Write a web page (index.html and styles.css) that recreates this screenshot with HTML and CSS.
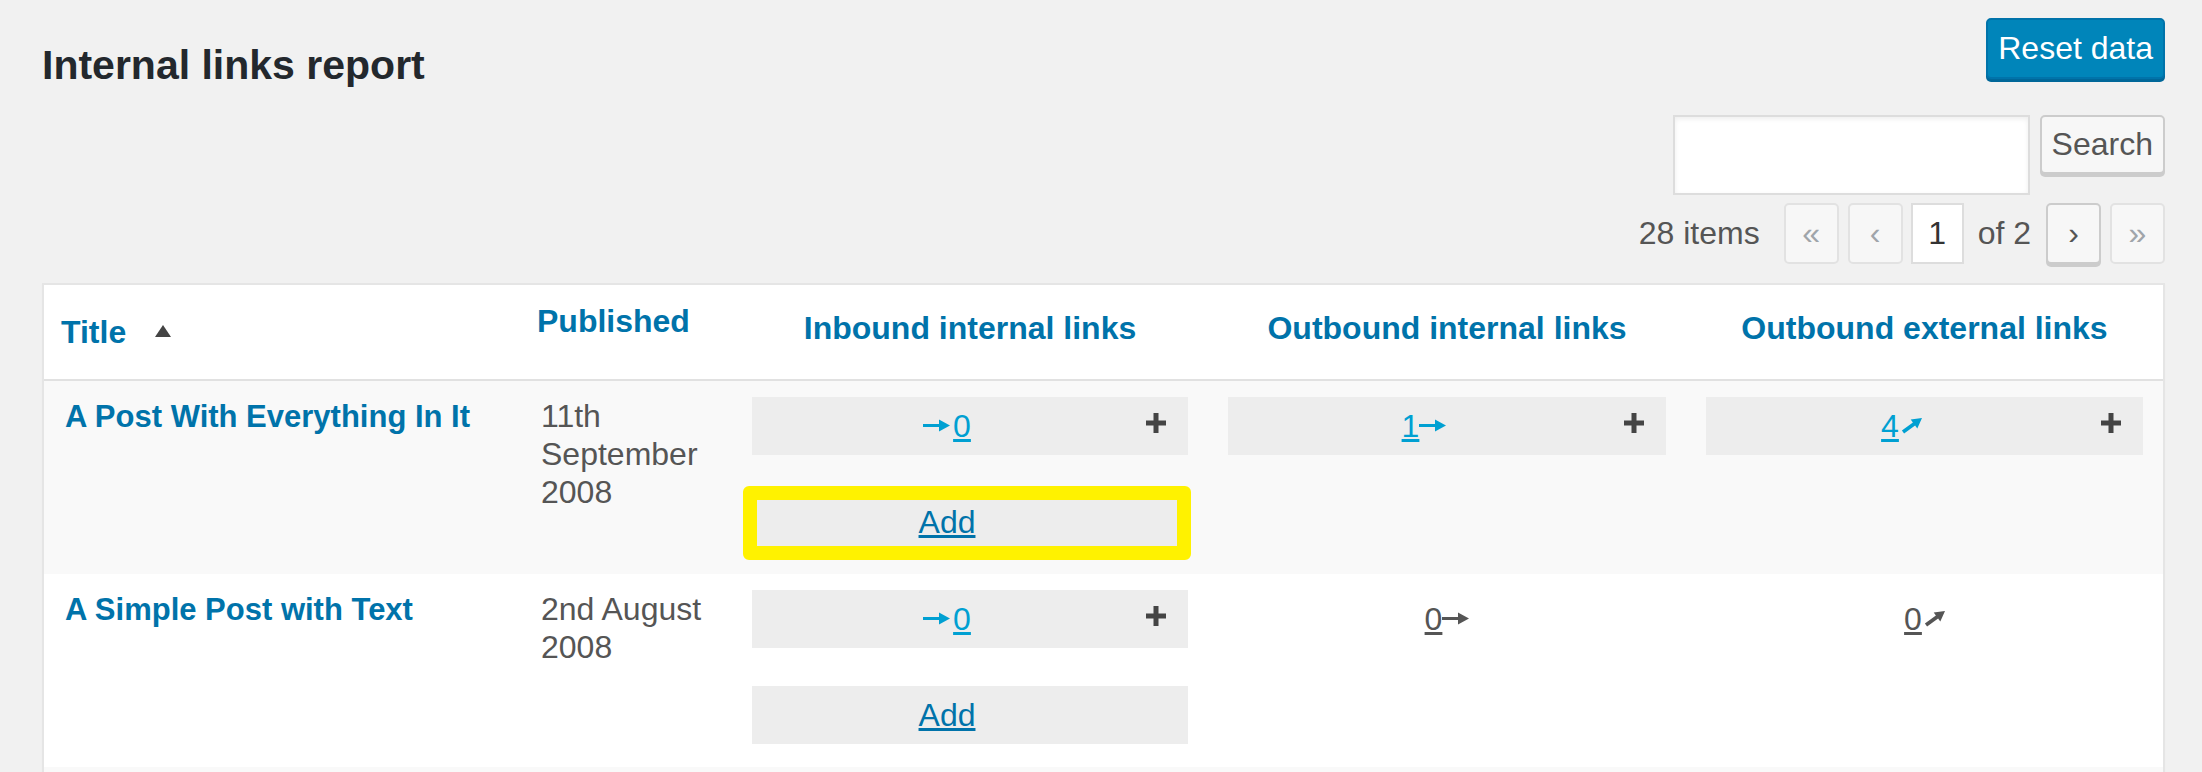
FILE: index.html
```html
<!DOCTYPE html>
<html lang="en">
<head>
<meta charset="utf-8">
<title>Internal links report</title>
<link rel="stylesheet" href="styles.css">
</head>
<body>
<div class="wrap">
  <div class="topbar">
    <h1 class="page-title">Internal links report</h1>
    <button class="btn btn-primary" type="button">Reset data</button>
  </div>

  <div class="search-row">
    <input class="search-input" type="search" aria-label="Search">
    <button class="btn btn-secondary" type="button">Search</button>
  </div>

  <div class="tablenav">
    <span class="items-count">28 items</span>
    <span class="page-btn disabled gap-9">«</span>
    <span class="page-btn disabled gap-8">‹</span>
    <input class="page-input" type="text" value="1" aria-label="Current page">
    <span class="page-total">of 2</span>
    <a class="page-btn active gap-9" href="#">›</a>
    <span class="page-btn disabled">»</span>
  </div>

  <table class="report">
    <colgroup>
      <col class="col-title">
      <col class="col-date">
      <col class="col-in">
      <col class="col-outint">
      <col class="col-outext">
    </colgroup>
    <thead>
      <tr>
        <th class="th-title"><a href="#">Title</a><svg class="sort-ind" viewBox="0 0 16 12" width="16" height="12"><path d="M8 0l8 12H0z"/></svg></th>
        <th class="th-date"><a href="#">Published</a></th>
        <th class="th-center">Inbound internal links</th>
        <th class="th-center">Outbound internal links</th>
        <th class="th-center">Outbound external links</th>
      </tr>
    </thead>
    <tbody>
      <tr class="alt">
        <td class="td-title"><a href="#">A Post With Everything In It</a></td>
        <td class="td-date">11th September 2008</td>
        <td class="td-box">
          <div class="link-box">
            <span class="count"><svg class="arr-r pre" viewBox="0 0 27 13" width="27" height="13"><path d="M0 5h16V0.5L27 6.5 16 12.5V8H0z"/></svg><a href="#">0</a></span>
            <svg class="plus" viewBox="0 0 20 20" width="20" height="20"><path d="M7.5 0h5v7.5H20v5h-7.5V20h-5v-7.5H0v-5h7.5z"/></svg>
          </div>
          <div class="add-box highlighted">
            <a href="#">Add</a>
            <span class="highlight" aria-hidden="true"></span>
          </div>
        </td>
        <td class="td-box">
          <div class="link-box">
            <span class="count"><a href="#">1</a><svg class="arr-r" viewBox="0 0 27 13" width="27" height="13"><path d="M0 5h16V0.5L27 6.5 16 12.5V8H0z"/></svg></span>
            <svg class="plus" viewBox="0 0 20 20" width="20" height="20"><path d="M7.5 0h5v7.5H20v5h-7.5V20h-5v-7.5H0v-5h7.5z"/></svg>
          </div>
        </td>
        <td class="td-box">
          <div class="link-box">
            <span class="count"><a href="#">4</a><svg class="arr-d" viewBox="0 0 21 16" width="21" height="16"><path d="M21 0L9.7 1.6 11.9 4.6 0.9 12.6 3.1 15.4 14.1 7.4 16.3 10.4z"/></svg></span>
            <svg class="plus" viewBox="0 0 20 20" width="20" height="20"><path d="M7.5 0h5v7.5H20v5h-7.5V20h-5v-7.5H0v-5h7.5z"/></svg>
          </div>
        </td>
      </tr>
      <tr>
        <td class="td-title"><a href="#">A Simple Post with Text</a></td>
        <td class="td-date">2nd August 2008</td>
        <td class="td-box">
          <div class="link-box">
            <span class="count"><svg class="arr-r pre" viewBox="0 0 27 13" width="27" height="13"><path d="M0 5h16V0.5L27 6.5 16 12.5V8H0z"/></svg><a href="#">0</a></span>
            <svg class="plus" viewBox="0 0 20 20" width="20" height="20"><path d="M7.5 0h5v7.5H20v5h-7.5V20h-5v-7.5H0v-5h7.5z"/></svg>
          </div>
          <div class="add-box">
            <a href="#">Add</a>
          </div>
        </td>
        <td class="td-box">
          <div class="link-box plain">
            <span class="count"><a href="#">0</a><svg class="arr-r" viewBox="0 0 27 13" width="27" height="13"><path d="M0 5h16V0.5L27 6.5 16 12.5V8H0z"/></svg></span>
          </div>
        </td>
        <td class="td-box">
          <div class="link-box plain">
            <span class="count"><a href="#">0</a><svg class="arr-d" viewBox="0 0 21 16" width="21" height="16"><path d="M21 0L9.7 1.6 11.9 4.6 0.9 12.6 3.1 15.4 14.1 7.4 16.3 10.4z"/></svg></span>
          </div>
        </td>
      </tr>
      <tr class="alt filler">
        <td colspan="5"></td>
      </tr>
    </tbody>
  </table>
</div>
</body>
</html>
```

FILE: styles.css
```css
* {
  box-sizing: border-box;
}

body {
  margin: 0;
  background: #f1f1f1;
  font-family: "Liberation Sans", Arial, sans-serif;
  color: #555;
}

.wrap {
  margin: 0 37px 0 42px;
}

/* ---------- top bar ---------- */
.topbar {
  display: flex;
  justify-content: space-between;
  align-items: flex-start;
  height: 82px;
  padding-top: 18px;
}

.page-title {
  margin: 26px 0 0;
  font-size: 41px;
  line-height: 42px;
  font-weight: 700;
  color: #23282d;
}

.btn {
  font-family: inherit;
  font-size: 32px;
  border-radius: 5px;
  padding: 0 10px;
  margin: 0;
  cursor: pointer;
}

.btn-primary {
  height: 61px;
  line-height: 57px;
  background: #0085ba;
  border: 2px solid #0073aa;
  color: #fff;
  box-shadow: 0 3px 0 #006799;
}

.btn-secondary {
  height: 59px;
  line-height: 55px;
  background: #f7f7f7;
  border: 2px solid #ccc;
  color: #555;
  box-shadow: 0 3px 0 #ccc;
}

/* ---------- search ---------- */
.search-row {
  display: flex;
  justify-content: flex-end;
  align-items: flex-start;
  gap: 10px;
  margin-top: 33px;
}

.search-input {
  width: 357px;
  height: 80px;
  margin: 0;
  padding: 0 10px;
  border: 2px solid #ddd;
  border-radius: 0;
  background: #fff;
  box-shadow: inset 0 2px 5px rgba(0, 0, 0, 0.07);
  font-family: inherit;
  font-size: 32px;
}

/* ---------- pagination ---------- */
.tablenav {
  display: flex;
  justify-content: flex-end;
  align-items: center;
  height: 61px;
  margin-top: 8px;
  font-size: 32px;
  color: #555;
}

.items-count {
  margin-right: 24px;
}

.page-btn {
  display: flex;
  align-items: center;
  justify-content: center;
  width: 55px;
  height: 61px;
  border: 2px solid #e2e2e2;
  border-radius: 5px;
  background: #f7f7f7;
  color: #a0a5aa;
  font-size: 32px;
  text-decoration: none;
}

.page-btn.active {
  border-color: #ccc;
  box-shadow: 0 3px 0 #ccc;
  color: #555;
}

.gap-9 {
  margin-right: 9px;
}

.gap-8 {
  margin-right: 8px;
}

.page-input {
  width: 53px;
  height: 61px;
  margin: 0 14px 0 0;
  padding: 0;
  border: 2px solid #ddd;
  background: #fff;
  text-align: center;
  font-family: inherit;
  font-size: 32px;
  color: #333;
}

.page-total {
  margin-right: 15px;
}

/* ---------- table ---------- */
.report {
  width: 100%;
  margin-top: 19px;
  table-layout: fixed;
  border-collapse: separate;
  border-spacing: 0;
  border: 2px solid #e5e5e5;
  background: #fff;
  box-shadow: 0 1px 1px rgba(0, 0, 0, 0.04);
}

.col-title { width: 475px; }
.col-date { width: 213px; }
.col-in { width: 476px; }
.col-outint { width: 478px; }
.col-outext { width: 477px; }

.report th {
  font-size: 32px;
  line-height: 38px;
  font-weight: 700;
  color: #0073aa;
  vertical-align: top;
  border-bottom: 2px solid #e1e1e1;
  white-space: nowrap;
}

.report th a {
  color: #0073aa;
  text-decoration: none;
}

.th-title {
  text-align: left;
  padding: 28px 10px 28px 17px;
}

.sort-ind {
  display: inline-block;
  margin-left: 29px;
  vertical-align: 6px;
  fill: #444;
}

.th-date {
  text-align: left;
  padding: 17px 10px 39px 18px;
}

.th-center {
  text-align: center;
  padding: 24px 10px 32px;
}

.report td {
  vertical-align: top;
  font-size: 32px;
  line-height: 38px;
  color: #555;
  padding: 16px 20px 23px;
}

.report tr.alt td {
  background: #f9f9f9;
}

.td-title {
  padding-left: 21px !important;
}

.td-title a {
  font-size: 31px;
  font-weight: 700;
  color: #0073aa;
  text-decoration: none;
}

.td-date {
  padding-left: 22px !important;
  padding-right: 10px !important;
}

.filler td {
  height: 40px;
}

/* ---------- link boxes ---------- */
.link-box,
.add-box {
  display: flex;
  align-items: center;
  height: 58px;
  background: #ededed;
}

.link-box.plain {
  background: transparent;
}

.count {
  flex: 1;
  text-align: center;
  white-space: nowrap;
  color: #00a0d2;
  fill: #00a0d2;
}

.count a {
  color: #00a0d2;
}

.plain .count,
.plain .count a {
  color: #555;
  fill: #555;
}

.arr-r {
  display: inline-block;
  vertical-align: 5px;
}

.arr-r.pre {
  margin-right: 3px;
}

.arr-d {
  display: inline-block;
  vertical-align: 3px;
  margin-left: 2px;
}

.plus {
  flex: none;
  margin: 0 22px 6px 4px;
  fill: #444;
}

.add-box {
  position: relative;
  justify-content: center;
  margin-top: 38px;
  padding-right: 46px;
}

.add-box a {
  color: #0073aa;
}

/* annotation overlay drawn over the first "Add" box */
.highlight {
  position: absolute;
  top: -7px;
  left: -9px;
  right: -3px;
  bottom: -9px;
  border: 14px solid #fff200;
  border-radius: 6px;
  pointer-events: none;
}
```
